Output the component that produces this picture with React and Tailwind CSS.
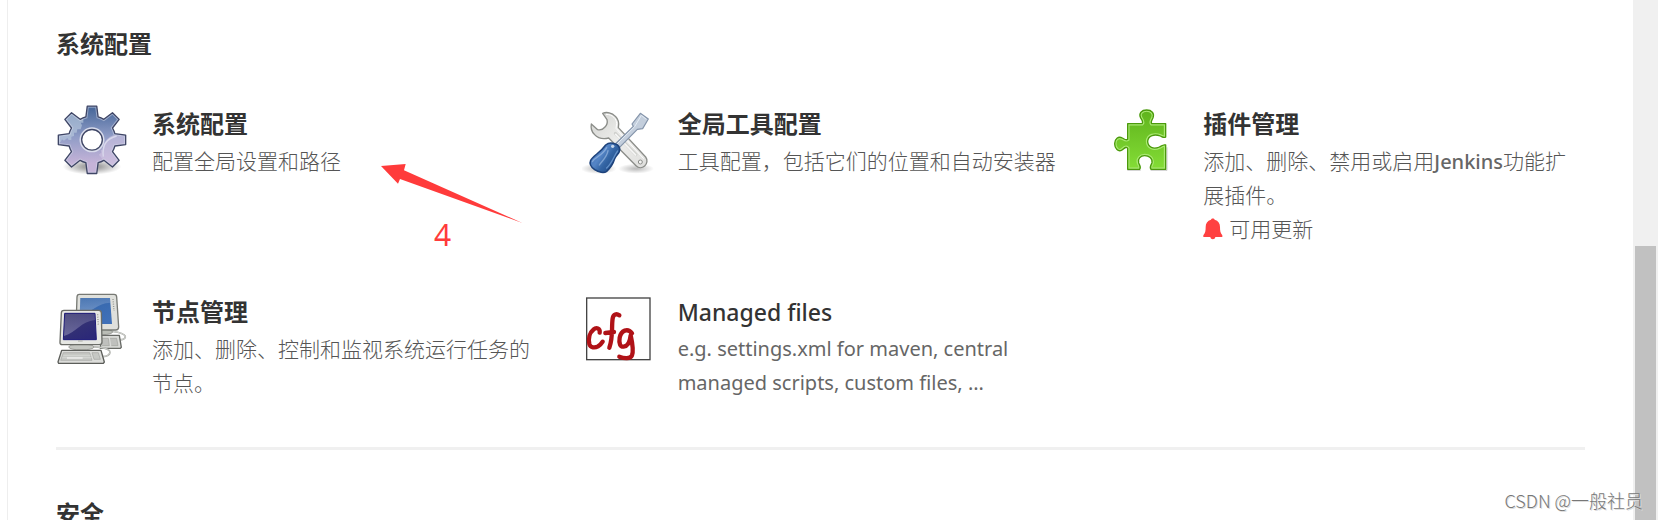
function polar(radius, degrees) {
  const a = (degrees * Math.PI) / 180;
  return `${(156 + radius * Math.cos(a)).toFixed(1)} ${(149.5 + radius * Math.sin(a)).toFixed(1)}`;
}

const gearPath =
  Array.from({ length: 8 }, (_, i) => {
    const a = i * 45 - 90;
    const start = i === 0 ? `M${polar(71, a - 15)}` : `A71 71 0 0 1 ${polar(71, a - 15)}`;
    return `${start}L${polar(102, a - 8)}L${polar(102, a + 8)}L${polar(71, a + 15)}`;
  }).join("") + "A71 71 0 0 1 " + polar(71, 255) + "Z";

function GearIcon() {
  return (
    <svg viewBox="48 42 216 216" className="size-[72px] shrink-0" aria-hidden="true">
      <defs>
        <linearGradient id="gear" x1="0" y1="0" x2="0" y2="1">
          <stop offset="0.05" stopColor="#4b6a9c" />
          <stop offset="0.45" stopColor="#8f9cc6" />
          <stop offset="0.85" stopColor="#c5b3d8" />
        </linearGradient>
        <radialGradient id="gearShadow">
          <stop offset="0.3" stopColor="#000" stopOpacity="0.35" />
          <stop offset="1" stopColor="#000" stopOpacity="0" />
        </radialGradient>
        <clipPath id="gearClip">
          <path d={gearPath} />
        </clipPath>
      </defs>
      <ellipse cx="156" cy="230" rx="88" ry="24" fill="url(#gearShadow)" />
      <path d={gearPath} fill="url(#gear)" />
      <g clipPath="url(#gearClip)">
        <path
          d="M50 60h72v24l8 2v12h-8l4 8-4 12h-10l-2 10h-8v10l-8 2v10h-8l-4-6-10 8-6-4-4 8-40 6z"
          fill="#b8c9dd"
          opacity="0.65"
        />
        <path d="M182 200l-6-6 8-6-2-8h6c2-26 14-38 36-46h40v60l-30 40-40-18z" fill="#d3c7e4" opacity="0.55" />
        <path d="M190 200c-4-30 8-54 40-62" fill="none" stroke="#dfe0f0" strokeWidth="4" opacity="0.8" />
        <path d={gearPath} fill="none" stroke="#d5dbec" strokeWidth="10" opacity="0.5" />
      </g>
      <path d={gearPath} fill="none" stroke="#3f4666" strokeWidth="4" strokeLinejoin="round" />
      <circle cx="156" cy="149.5" r="35" fill="#fff" stroke="#d9dcec" strokeWidth="5" />
      <circle cx="156" cy="149.5" r="31" fill="#fff" stroke="#3f4666" strokeWidth="4" />
    </svg>
  );
}

function ToolsIcon() {
  return (
    <svg viewBox="36 42 216 216" className="size-[72px] shrink-0" aria-hidden="true">
      <defs>
        <linearGradient id="wrench" x1="0" y1="0" x2="1" y2="1">
          <stop offset="0" stopColor="#d2d3d0" />
          <stop offset="0.5" stopColor="#eeeeec" />
          <stop offset="1" stopColor="#dededc" />
        </linearGradient>
        <linearGradient id="handle" x1="0" y1="0" x2="1" y2="0.7">
          <stop offset="0" stopColor="#3b6bb0" />
          <stop offset="0.45" stopColor="#5585c6" />
          <stop offset="0.65" stopColor="#3465a4" />
          <stop offset="1" stopColor="#204a87" />
        </linearGradient>
        <radialGradient id="toolShadow">
          <stop offset="0.1" stopColor="#000" stopOpacity="0.25" />
          <stop offset="1" stopColor="#000" stopOpacity="0" />
        </radialGradient>
      </defs>
      <ellipse cx="86" cy="236" rx="54" ry="16" fill="url(#toolShadow)" />
      <ellipse cx="198" cy="236" rx="54" ry="15" fill="url(#toolShadow)" />
      <path
        d="M98 70c12-5 28-2 38 9 9 9 12 22 9 34l82 88c6 8 5 20-3 27-8 7-19 6-26-1l-82-83c-16 4-32 1-43-11-9-9-11-20-9-31l19 17c8 2 17-2 22-8 5-5 8-14 6-22z"
        fill="url(#wrench)"
        stroke="#8b8d89"
        strokeWidth="4"
        strokeLinejoin="round"
      />
      <path d="M108 73c20 0 32 14 32 28l-2 14 83 91" fill="none" stroke="#fff" strokeWidth="3" />
      <path d="M136 130l62 64" stroke="#cfd0cd" strokeWidth="9" strokeLinecap="round" />
      <path d="M137 133l60 62" stroke="#f6f6f5" strokeWidth="5" strokeLinecap="round" />
      <circle cx="211" cy="216" r="6" fill="#f3f3f2" stroke="#8b8d89" strokeWidth="3" />
      <path d="M136 162l54-53-4-7 25-32 24 17-17 29-16 2-54 55z" fill="#c3cedc" stroke="#8494aa" strokeWidth="3.5" strokeLinejoin="round" />
      <path d="M141 162l53-52 20-34 15 12" fill="none" stroke="#e5edf5" strokeWidth="3" />
      <path
        d="M107 165c8-7 18-7 27-4 11 3 16 10 15 20-1 10-11 14-15 25-5 16-13 28-24 38-8 6-24 3-36-5-11-8-17-17-12-28 8-16 27-20 45-46z"
        fill="url(#handle)"
        stroke="#1d427b"
        strokeWidth="4.5"
      />
      <path d="M110 173c-15 27-35 27-43 42m47-33c-3 20-17 29-26 43" fill="none" stroke="#a5c2e6" strokeWidth="4" strokeLinecap="round" opacity="0.6" />
      <path d="M143 183c-10 12-15 34-33 51" fill="none" stroke="#6390c8" strokeWidth="4" strokeLinecap="round" />
      <circle cx="128" cy="169" r="5" fill="#dce8f6" opacity="0.85" />
    </svg>
  );
}

function PluginIcon() {
  const shape =
    "M86 101h43c5-4 0-11-4-17-7-14 3-24 18-24s24 10 19 23c-3 7-8 13-4 18h42v40c-5 4-11-1-16-3-16-6-37-3-38 16 0 18 18 25 35 17 6-3 12-8 19-6v73h-44c-6-6 1-13 3-20 2-14-9-21-22-21s-22 10-18 22c3 7 8 13 3 19H86v-63c-5-7-11 1-17 5-11 7-22-4-22-19s11-23 23-17c6 3 11 8 16 4z";
  return (
    <svg viewBox="24 42 216 216" className="size-[72px] shrink-0" aria-hidden="true">
      <defs>
        <linearGradient id="piece" x1="0" y1="0" x2="0" y2="1">
          <stop offset="0" stopColor="#5fb31c" />
          <stop offset="1" stopColor="#84dd36" />
        </linearGradient>
        <clipPath id="pieceClip">
          <path d={shape} />
        </clipPath>
      </defs>
      <path d="M85 241h40m30 0h49v-69" fill="none" stroke="#000" strokeWidth="3" opacity="0.2" />
      <path d={shape} fill="url(#piece)" />
      <path d={shape} fill="none" stroke="#a9e872" strokeWidth="11" clipPath="url(#pieceClip)" />
      <path d={shape} fill="none" stroke="#4b9a0c" strokeWidth="4" strokeLinejoin="round" />
    </svg>
  );
}

function NodesIcon() {
  return (
    <svg viewBox="48 36 216 216" className="size-[72px] shrink-0" aria-hidden="true">
      <defs>
        <linearGradient id="screenBack" x1="0" y1="0" x2="0.6" y2="1">
          <stop offset="0" stopColor="#3465a8" />
          <stop offset="1" stopColor="#3f70b8" />
        </linearGradient>
        <linearGradient id="screenFront" x1="0" y1="0" x2="0.6" y2="1">
          <stop offset="0" stopColor="#3c3b70" />
          <stop offset="1" stopColor="#2c2978" />
        </linearGradient>
        <linearGradient id="gloss" x1="0" y1="0" x2="0" y2="1">
          <stop offset="0" stopColor="#fff" stopOpacity="0.12" />
          <stop offset="1" stopColor="#fff" stopOpacity="0.28" />
        </linearGradient>
      </defs>
      <path d="M185 152c30-2 74 8 71 20-2 7-16 8-26 7" fill="none" stroke="#a3a5a0" strokeWidth="5" />
      <path d="M185 152c30-2 74 8 71 20-2 7-16 8-26 7" fill="none" stroke="#e4e5e2" strokeWidth="2" />
      <ellipse cx="188" cy="156" rx="30" ry="8" fill="#babdb6" stroke="#888a85" strokeWidth="2" />
      <path d="M118 43h104c6 0 8 3 8 8l6 90c0 7-3 9-9 9H116c-6 0-8-3-8-9l3-90c0-5 2-8 7-8z" fill="#dfe0dc" stroke="#777974" strokeWidth="4" />
      <path d="M121 54h89l6 78h-98z" fill="url(#screenBack)" />
      <path d="M121 54h89l1 14c-40 2-56 28-92 40z" fill="url(#gloss)" />
      <path d="M219 57l3 36" stroke="#969893" strokeWidth="4" strokeDasharray="3 4" />
      <path d="M184 166h54l6 36-3 3h-60z" fill="#d9dad7" stroke="#686a66" strokeWidth="4" strokeLinejoin="round" />
      <path d="M186 175h19l3 22h-22m24-22h20l4 22h-20" fill="#bfc0bd" stroke="#a0a29d" strokeWidth="2" />
      <path d="M120 202c40-5 91 0 90 15-1 9-12 12-22 13" fill="none" stroke="#a3a5a0" strokeWidth="5" />
      <path d="M120 202c40-5 91 0 90 15-1 9-12 12-22 13" fill="none" stroke="#e4e5e2" strokeWidth="2" />
      <ellipse cx="124" cy="201" rx="38" ry="9" fill="#c5c7c2" stroke="#898b86" strokeWidth="2" />
      <path d="M72 91h104c6 0 8 3 8 8l2 87c0 5-3 8-8 8H67c-5 0-8-3-7-8l4-87c0-5 3-8 8-8z" fill="#e6e7e3" stroke="#6b6d68" strokeWidth="4" />
      <path d="M74 100h91l4 79H70z" fill="url(#screenFront)" stroke="#1d1a78" strokeWidth="3" />
      <path d="M76 102h88l1 18c-42 4-54 36-93 48z" fill="url(#gloss)" />
      <path d="M173 103l2 34" stroke="#969893" strokeWidth="4" strokeDasharray="3 4" />
      <path d="M114 183h14" stroke="#aaaca7" strokeWidth="3" />
      <path d="M65 211h118l10 35-3 4H56l-2-4z" fill="#dcddda" stroke="#5c5e5a" strokeWidth="4" strokeLinejoin="round" />
      <path d="M70 218h79l7 23H62zm86 0h19l6 20h-19z" fill="#c6c8c4" stroke="#a3a5a0" strokeWidth="2" />
      <path d="M70 226h82m-85 7h88" stroke="#dddedb" strokeWidth="2" />
      <path d="M81 234h47" stroke="#f2f2f0" strokeWidth="4" />
    </svg>
  );
}

function ConfigFileIcon() {
  return (
    <svg viewBox="36 36 216 216" className="size-[72px] shrink-0" aria-hidden="true">
      <rect x="50" y="54" width="190" height="185" fill="#fff" stroke="#444" strokeWidth="4" />
      <g fill="none" stroke="#b01217" strokeWidth="13" strokeLinecap="round" strokeLinejoin="round">
        <path d="M89 158c2-14-10-17-19-9-12 9-15 28-12 43 3 12 17 12 26 7 8-5 11-9 14-14" />
        <path d="M148 106c-8-6-18-4-20 9-4 25 2 56-10 88M106 159l26-3" />
        <path d="M186 160c-13-17-33-9-37 13-3 18 2 28 12 27 12-1 19-16 21-34 4 18 9 47 4 60-5 11-23 10-38 4" />
      </g>
    </svg>
  );
}

function BellIcon() {
  return (
    <svg viewBox="312 383 60 66" className="h-[22px] w-5 shrink-0" aria-hidden="true">
      <path
        d="M336 388c1-5 10-5 11 0 11 3 16 11 16 22 0 12 1 17 7 25v5h-21c-1 9-14 9-15 0h-21v-5c6-8 7-13 7-25 0-11 5-19 16-22z"
        fill="#ff4141"
      />
    </svg>
  );
}

function Item({ icon, title, latin = false, children }) {
  return (
    <a href="#" className="flex items-start gap-6">
      {icon}
      <div className="min-w-0 flex-1">
        <h3 className={latin ? "text-[23px] leading-10 font-medium text-[#333]" : "text-2xl leading-10 font-bold text-[#333]"}>
          {title}
        </h3>
        <div className={latin ? "text-xl leading-[34px] font-[450] text-[#666]" : "text-[21px] leading-[34px] font-light text-[#555]"}>
          {children}
        </div>
      </div>
    </a>
  );
}

export default function App() {
  return (
    <div className="relative flex h-screen overflow-hidden bg-white font-['Noto_Sans','Noto_Sans_CJK_SC',sans-serif]">
      <main className="ml-[7px] min-w-0 flex-1 border-l border-[#eee] pr-12 pl-12">
        <section className="border-b-3 border-[#f0f0f0] pt-6 pb-[47px]">
          <h2 className="text-2xl leading-10 font-bold text-[#333]">系统配置</h2>
          <div className="mt-10 grid grid-cols-3 gap-x-12 gap-y-[46px]">
            <Item icon={<GearIcon />} title="系统配置">
              <p>配置全局设置和路径</p>
            </Item>
            <Item icon={<ToolsIcon />} title="全局工具配置">
              <p>工具配置，包括它们的位置和自动安装器</p>
            </Item>
            <Item icon={<PluginIcon />} title="插件管理">
              <p>
                添加、删除、禁用或启用<span className="text-xl font-medium text-[#666]">Jenkins</span>功能扩展插件。
              </p>
              <p className="flex items-center gap-1.5">
                <BellIcon />
                可用更新
              </p>
            </Item>
            <Item icon={<NodesIcon />} title="节点管理">
              <p>添加、删除、控制和监视系统运行任务的节点。</p>
            </Item>
            <Item icon={<ConfigFileIcon />} title="Managed files" latin>
              <p>e.g. settings.xml for maven, central managed scripts, custom files, ...</p>
            </Item>
          </div>
        </section>
        <section className="pt-11">
          <h2 className="text-2xl leading-10 font-bold text-[#333]">安全</h2>
        </section>
      </main>

      <div className="flex w-[25px] shrink-0 flex-col bg-[#f0f0f0] px-0.5 pt-[246px]">
        <div className="flex-1 bg-[#c1c1c1]" />
      </div>

      <svg viewBox="0 0 510 330" className="absolute top-[150px] left-[370px] h-[110px] w-[170px]" aria-hidden="true">
        <path d="M33 48l74-6-5 19 355 158L90 87l-6 14z" fill="#ff3b3b" />
      </svg>
      <p className="absolute top-[215px] left-[434px] text-[30px] leading-10 text-[#ff3b3b]">4</p>
      <p className="absolute right-[15px] bottom-2 text-lg leading-6 font-light text-[#777] [text-shadow:1px_1px_0_#ddd] font-['Noto_Sans_CJK_SC',sans-serif]">
        CSDN @一般社员
      </p>
    </div>
  );
}
